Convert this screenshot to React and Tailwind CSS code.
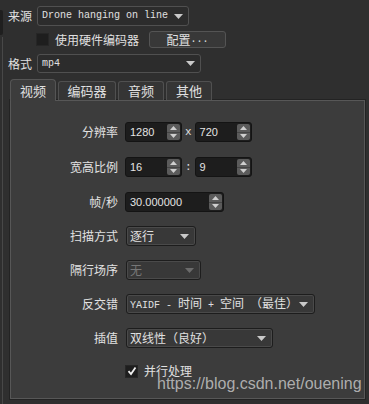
import React from 'react';

const cjk = "font-['Noto_Sans_CJK_SC',sans-serif]";
const mono = "font-['Liberation_Mono','Noto_Sans_CJK_SC',monospace]";

const Arrow = ({ dim }) => (
    <svg width="9" height="5" viewBox="0 0 9 5" className="shrink-0">
        <path d="M0 0 L9 0 L4.5 5 Z" fill={dim ? '#6b6b6b' : '#c9c9c9'} />
    </svg>
);

// combo box inside the tab panel
const Combo = ({ w, children, dim, className = '' }) => (
    <div
        className={`${w} h-[20px] flex items-center justify-between pl-[3px] pr-[6px] rounded-[3px] border border-[#1d1d1d] shadow-[inset_0_0_0_1px_#4a4a4a] bg-[#383838] ${dim ? 'text-[#777]' : 'text-[#e0e0e0]'} ${className}`}
    >
        <span className="whitespace-pre leading-none">{children}</span>
        <Arrow dim={dim} />
    </div>
);

// combo box on the dark top area
const TopCombo = ({ w, h, children }) => (
    <div className={`${w} ${h} flex items-center justify-between pl-[4px] pr-[5px] rounded-[3px] border border-[#505050] bg-[#2c2c2c] text-[#e0e0e0]`}>
        <span className={`${mono} text-[10px] leading-none whitespace-nowrap`}>{children}</span>
        <Arrow />
    </div>
);

const Spin = ({ w, value }) => (
    <div className={`${w} h-[20px] flex rounded-[3px] border border-[#141414] bg-[#1d1d1d]`}>
        <div className="flex-1 flex items-center pl-[4px] font-['Liberation_Sans',sans-serif] text-[11px] text-[#e4e4e4]">{value}</div>
        <div className="w-[13px] my-px mr-px flex flex-col rounded-[2px] bg-[#5b5b5b] overflow-hidden">
            <div className="flex-1 flex items-center justify-center border-b border-[#444]">
                <svg width="7" height="4" viewBox="0 0 7 4"><path d="M0 4 L7 4 L3.5 0 Z" fill="#cfcfcf" /></svg>
            </div>
            <div className="flex-1 flex items-center justify-center">
                <svg width="7" height="4" viewBox="0 0 7 4"><path d="M0 0 L7 0 L3.5 4 Z" fill="#cfcfcf" /></svg>
            </div>
        </div>
    </div>
);

const Row = ({ label, mt, children }) => (
    <div className={`flex items-center h-[20px] ${mt}`}>
        <div className="w-[107px] text-right text-[#e2e2e2] whitespace-nowrap">{label}</div>
        <div className="ml-[7px] flex items-center">{children}</div>
    </div>
);

const tabs = [
    { name: '视频', w: 'w-[46px]' },
    { name: '编码器', w: 'w-[58px]' },
    { name: '音频', w: 'w-[46px]' },
    { name: '其他', w: 'w-[46px]' },
];

export default function App() {
    return (
        <div className={`relative w-[369px] h-[404px] overflow-hidden flex bg-[#2f2f2f] ${cjk} text-[12px] text-[#e0e0e0]`}>
            {/* parent frame edge */}
            <div className="w-[3px] flex flex-col pt-[10px]">
                <div className="h-[25px] bg-[#1f1f1f] rounded-r-[2px]" />
                <div className="flex-1 mt-[2px] border-r border-[#484848]" />
            </div>

            <div className="flex-1 flex flex-col pl-[5px]">
                <div className="mt-[6px] flex items-center h-[20px]">
                    <span className="w-[24px] leading-none">来源</span>
                    <TopCombo w="ml-[5px] w-[152px]" h="h-[20px]">Drone hanging on line</TopCombo>
                </div>

                <div className="mt-[5px] flex items-center h-[17px]">
                    <div className="ml-[28px] w-[13px] h-[13px] bg-[#1e1e1e] border border-[#262626]" />
                    <span className="ml-[6px] w-[84px] leading-none">使用硬件编码器</span>
                    <div className="ml-[10px] w-[77px] h-[17px] flex items-center justify-center rounded-[3px] border border-[#545454] bg-[#383838] leading-none">
                        配置<span className={`${mono} text-[10px]`}>...</span>
                    </div>
                </div>

                <div className="mt-[6px] flex items-center h-[19px]">
                    <span className="w-[24px] leading-none">格式</span>
                    <TopCombo w="ml-[5px] w-[164px]" h="h-[19px]">mp4</TopCombo>
                </div>

                {/* tabs */}
                <div className="mt-[6px] ml-[2px] flex items-end gap-[2px] relative z-10">
                    {tabs.map((t, i) => (
                        <div
                            key={t.name}
                            className={
                                i === 0
                                    ? `${t.w} h-[22px] -mb-px flex items-center justify-center rounded-t-[4px] border border-b-0 border-[#555] bg-[#3c3c3c] text-[13px]`
                                    : `${t.w} h-[19px] flex items-center justify-center rounded-t-[3px] border border-b-0 border-[#505050] bg-[#353535] text-[13px]`
                            }
                        >
                            {t.name}
                        </div>
                    ))}
                </div>

                {/* tab panel */}
                <div className="ml-[2px] w-[355px] h-[299px] flex flex-col border border-[#575757] shadow-[0_0_0_1px_#232323] bg-[#3c3c3c] pt-[21px]">
                    <Row label="分辨率" mt="">
                        <Spin w="w-[57px]" value="1280" />
                        <span className={`${mono} mx-[3px] text-[11px]`}>x</span>
                        <Spin w="w-[57px]" value="720" />
                    </Row>
                    <Row label="宽高比例" mt="mt-[15px]">
                        <Spin w="w-[57px]" value="16" />
                        <span className={`${mono} mx-[3px] text-[11px]`}>:</span>
                        <Spin w="w-[57px]" value="9" />
                    </Row>
                    <Row label="帧/秒" mt="mt-[15px]">
                        <Spin w="w-[99px]" value="30.000000" />
                    </Row>
                    <Row label="扫描方式" mt="mt-[14px]">
                        <Combo w="ml-px w-[70px]">逐行</Combo>
                    </Row>
                    <Row label="隔行场序" mt="mt-[14px]">
                        <Combo w="ml-px w-[75px]" dim>无</Combo>
                    </Row>
                    <Row label="反交错" mt="mt-[14px]">
                        <Combo w="ml-px w-[189px]">
                            <span className={`${mono} text-[10px]`}>YAIDF - </span>时间<span className={`${mono} text-[10px]`}> + </span>空间<span className={`${mono} text-[10px]`}> </span>（最佳）
                        </Combo>
                    </Row>
                    <Row label="插值" mt="mt-[14px]">
                        <Combo w="ml-px w-[147px]">双线性（良好）</Combo>
                    </Row>
                    <div className="mt-[15px] h-[16px] flex items-center pl-[114px]">
                        <div className="w-[13px] h-[13px] bg-[#1e1e1e] border border-[#262626] flex items-center justify-center">
                            <svg width="10" height="10" viewBox="0 0 10 10">
                                <path d="M1.5 5.2 L4 8 L8.5 1.5" fill="none" stroke="#f0f0f0" strokeWidth="1.8" />
                            </svg>
                        </div>
                        <span className="ml-[6px] leading-none">并行处理</span>
                    </div>
                </div>
            </div>

            {/* watermark */}
            <div className="absolute left-[157px] top-[376px] font-['Liberation_Sans',sans-serif] text-[16px] leading-none text-[#bdbdbd]/90 whitespace-nowrap">
                https://blog.csdn.net/ouening
            </div>
        </div>
    );
}
